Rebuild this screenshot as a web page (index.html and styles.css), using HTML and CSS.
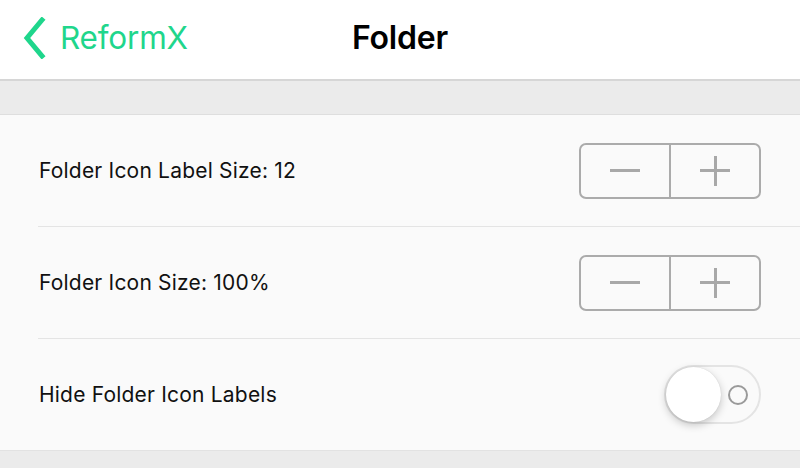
FILE: index.html
```html
<!DOCTYPE html>
<html>
<head>
<meta charset="utf-8">
<link rel="stylesheet" href="styles.css">
</head>
<body>
<header class="nav">
  <div class="back">
    <svg class="chev" width="24" height="42" viewBox="0 0 24 42"><path d="M20 3 L5 21 L20 39" fill="none" stroke="#1fd68c" stroke-width="5" stroke-linecap="square" stroke-linejoin="miter"/></svg>
    <span class="back-label">ReformX</span>
  </div>
  <h1 class="title">Folder</h1>
</header>
<div class="spacer"></div>
<section class="list">
  <div class="row">
    <span class="label">Folder Icon Label Size: 12</span>
    <div class="stepper">
      <div class="step"><span class="minus"></span></div>
      <div class="step"><span class="plus"></span></div>
    </div>
  </div>
  <div class="row">
    <span class="label">Folder Icon Size: 100%</span>
    <div class="stepper">
      <div class="step"><span class="minus"></span></div>
      <div class="step"><span class="plus"></span></div>
    </div>
  </div>
  <div class="row">
    <span class="label">Hide Folder Icon Labels</span>
    <div class="toggle">
      <span class="knob"></span>
      <span class="ring"></span>
    </div>
  </div>
</section>
<div class="footer"></div>
</body>
</html>
```
FILE: styles.css
```css
* { box-sizing: border-box; }
html, body { margin: 0; padding: 0; }
body {
  width: 800px;
  height: 468px;
  overflow: hidden;
  background: #ebebeb;
  font-family: Inter, "Noto Sans", sans-serif;
  color: #111;
}
.nav {
  height: 81px;
  background: #fff;
  border-bottom: 2px solid #d6d6d6;
  display: flex;
  align-items: center;
  justify-content: center;
  position: relative;
}
.back {
  position: absolute;
  left: 22px;
  top: 17px;
  display: flex;
  align-items: center;
  gap: 14px;
}
.chev { display: block; }
.back-label {
  color: #1fd68c;
  font-size: 31.5px;
  letter-spacing: -0.2px;
  line-height: 42px;
}
.title {
  margin: 0;
  font-size: 32px;
  font-weight: 600;
  color: #000;
  letter-spacing: -0.2px;
  margin-top: -4px;
}
.spacer {
  height: 34px;
  background: #ebebeb;
  border-bottom: 1px solid #dedede;
}
.list {
  background: #fafafa;
  border-bottom: 1px solid #e2e2e2;
}
.row {
  height: 112px;
  margin-left: 38px;
  padding-right: 39px;
  display: flex;
  align-items: center;
  justify-content: space-between;
  border-bottom: 1px solid #e4e4e4;
}
.row:last-child { border-bottom: none; height: 111px; }
.label {
  font-size: 21px;
  color: #111;
  padding-left: 1px;
  letter-spacing: 0.2px;
}
.stepper {
  display: flex;
  width: 182px;
  height: 56px;
  border: 2px solid #ababab;
  border-radius: 7px;
}
.step {
  flex: 1;
  display: flex;
  align-items: center;
  justify-content: center;
  position: relative;
}
.step + .step { border-left: 2px solid #ababab; }
.minus {
  width: 30px;
  height: 3px;
  background: #a8a8a8;
}
.plus {
  width: 30px;
  height: 30px;
  position: relative;
}
.plus::before, .plus::after {
  content: "";
  position: absolute;
  background: #a8a8a8;
}
.plus::before { left: 0; top: 13.5px; width: 30px; height: 3px; }
.plus::after { top: 0; left: 13.5px; width: 3px; height: 30px; }
.toggle {
  width: 97px;
  height: 59px;
  border: 2px solid #e4e4e4;
  border-radius: 30px;
  display: flex;
  align-items: center;
  padding-left: 0;
  position: relative;
}
.knob {
  width: 55px;
  height: 55px;
  border-radius: 50%;
  background: #fff;
  box-shadow: 0 3px 8px rgba(0,0,0,0.22), 0 0 1px rgba(0,0,0,0.15);
}
.ring {
  width: 20px;
  height: 20px;
  border-radius: 50%;
  border: 2px solid #9a9a9a;
  margin-left: 7px;
}
.footer { height: 20px; background: #ebebeb; }
```
